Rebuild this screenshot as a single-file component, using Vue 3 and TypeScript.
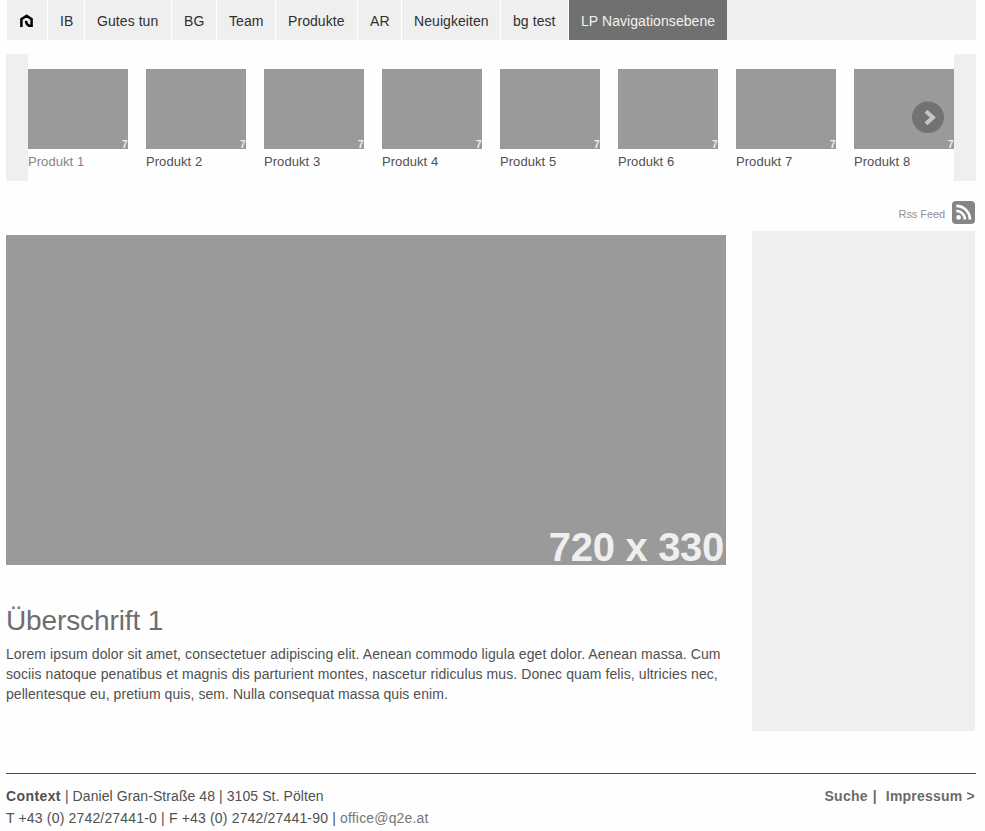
<script setup lang="ts">
interface NavItem {
  label: string
  active?: boolean
}

const navItems: NavItem[] = [
  { label: 'IB' },
  { label: 'Gutes tun' },
  { label: 'BG' },
  { label: 'Team' },
  { label: 'Produkte' },
  { label: 'AR' },
  { label: 'Neuigkeiten' },
  { label: 'bg test' },
  { label: 'LP Navigationsebene', active: true },
]

const products: string[] = Array.from({ length: 8 }, (_, i) => `Produkt ${i + 1}`)

const paragraph: string[] = [
  'Lorem ipsum dolor sit amet, consectetuer adipiscing elit. Aenean commodo ligula eget dolor. Aenean massa. Cum',
  'sociis natoque penatibus et magnis dis parturient montes, nascetur ridiculus mus. Donec quam felis, ultricies nec,',
  'pellentesque eu, pretium quis, sem. Nulla consequat massa quis enim.',
]
</script>

<template>
  <div class="page">
    <nav class="nav">
      <a class="nav-item home" aria-label="Home">
        <svg width="14" height="14" viewBox="0 0 14 14">
          <path d="M2.4 13V5.2L7.6 1.8l5 3.4v6.5H9.8Q7.2 10.6 7 6.8" fill="none" stroke="#000" stroke-width="2.5" />
        </svg>
      </a>
      <a v-for="item in navItems" :key="item.label" class="nav-item" :class="{ active: item.active }">{{ item.label }}</a>
    </nav>

    <section class="carousel">
      <div class="products">
        <a v-for="(name, i) in products" :key="name" class="product" :class="{ current: i === 0 }">
          <span class="thumb">7</span>
          <span class="name">{{ name }}</span>
        </a>
      </div>
      <button class="next" aria-label="Next">
        <svg width="32" height="32" viewBox="0 0 32 32">
          <ellipse cx="16" cy="16.3" rx="16" ry="15.7" fill="#727272" />
          <path d="M14 10.2l6.8 6.3-6.8 6.3" fill="none" stroke="#c4c4c4" stroke-width="4.2" />
        </svg>
      </button>
    </section>

    <div class="rss">
      <span>Rss Feed</span>
      <svg width="23" height="23" viewBox="0 0 23 23">
        <rect width="23" height="23" rx="4" fill="#858585" />
        <circle cx="6.6" cy="16.4" r="2.3" fill="#fff" />
        <path d="M4.3 9.9a8.6 8.6 0 0 1 8.6 8.6M4.3 4.9a13.6 13.6 0 0 1 13.6 13.6" fill="none" stroke="#fff" stroke-width="2.7" />
      </svg>
    </div>

    <div class="columns">
      <main class="content">
        <div class="hero">720 x 330</div>
        <h1>Überschrift 1</h1>
        <p class="copy"><span v-for="(line, i) in paragraph" :key="i" class="line">{{ line }}</span></p>
      </main>
      <aside class="sidebar"></aside>
    </div>

    <footer class="footer">
      <div class="contact">
        <div class="address"><b>Context</b> | Daniel Gran-Straße 48 | 3105 St. Pölten</div>
        <div class="phone">T +43 (0) 2742/27441-0 | F +43 (0) 2742/27441-90 | <a class="mail">office@q2e.at</a></div>
      </div>
      <div class="links"><a>Suche</a><span>|</span><a class="imprint">Impressum &gt;</a></div>
    </footer>
  </div>
</template>

<style>
body {
  margin: 0;
  background: #fefefe;
  overflow: hidden;
}
</style>

<style scoped>
.page {
  box-sizing: border-box;
  width: 985px;
  height: 831px;
  padding: 0 9px 0 6px;
  overflow: hidden;
  font-family: 'Liberation Sans', Arial, sans-serif;
  font-size: 14px;
  color: #505050;
}
.nav {
  display: grid;
  grid-template-columns: 40px 36px 86px 44px 58px 81px 43px 98px 67px 158px;
  column-gap: 1px;
  height: 40px;
  margin-left: 1px;
  background: linear-gradient(90deg, #fff 0 720px, #efefef 720px);
}
.nav-item {
  padding-left: 12px;
  line-height: 42px;
  height: 40px;
  background: #efefef;
  color: #303030;
  letter-spacing: 0.07px;
  white-space: nowrap;
}
.home svg {
  display: block;
  margin-top: 14px;
}
.nav-item.active {
  background: #707070;
  color: #f2f2f2;
}
.carousel {
  position: relative;
  box-sizing: border-box;
  height: 127px;
  margin-top: 14px;
  padding-top: 15px;
  border: solid #efefef;
  border-width: 0 22px;
}
.products {
  display: flex;
  gap: 18px;
}
.product {
  width: 100px;
  flex: none;
}
.product.current {
  color: #858585;
}
.thumb {
  display: block;
  box-sizing: border-box;
  height: 80px;
  padding: 70px 0.5px 0 0;
  background: #9a9a9a;
  color: #f0f0f0;
  font-size: 10px;
  font-weight: bold;
  line-height: 12px;
  text-align: right;
}
.name {
  display: block;
  font-size: 13px;
  line-height: 16px;
  margin-top: 5px;
  letter-spacing: 0.06px;
}
.next {
  position: absolute;
  right: 10px;
  top: 47px;
  width: 32px;
  height: 32px;
  padding: 0;
  border: 0;
  background: none;
}
.next svg {
  display: block;
}
.rss {
  display: flex;
  justify-content: flex-end;
  align-items: center;
  gap: 7px;
  height: 23px;
  margin: 20px 1px 0 0;
  font-size: 11px;
  letter-spacing: -0.08px;
  color: #929292;
}
.rss span {
  padding-top: 3px;
}
.columns {
  display: flex;
  justify-content: space-between;
  height: 500px;
  margin: 7px 1px 0 0;
}
.content {
  width: 720px;
}
.hero {
  box-sizing: border-box;
  height: 330px;
  margin-top: 4px;
  padding: 289px 2px 0 0;
  background: #9a9a9a;
  color: #efefef;
  font-size: 40px;
  font-weight: bold;
  letter-spacing: -0.3px;
  line-height: 46px;
  text-align: right;
}
h1 {
  margin: 40px 0 0;
  font-size: 28px;
  font-weight: normal;
  letter-spacing: -0.12px;
  line-height: 32px;
  color: #6e6e6e;
}
.copy {
  margin: 7px 0 0;
  line-height: 20px;
  letter-spacing: 0.087px;
}
.line {
  display: block;
  white-space: nowrap;
}
.line:last-child {
  letter-spacing: 0.055px;
}
.sidebar {
  width: 223px;
  background: #efefef;
}
.footer {
  display: flex;
  justify-content: space-between;
  margin-top: 42px;
  padding-top: 11px;
  border-top: 1px solid #4c4c4c;
  line-height: 22px;
}
.address {
  letter-spacing: 0.08px;
}
.address b {
  letter-spacing: 0.4px;
}
.phone {
  letter-spacing: 0.17px;
}
.mail {
  color: #777;
}
.links {
  display: flex;
  gap: 5px;
  margin-right: 1px;
  font-weight: bold;
  letter-spacing: 0.22px;
  color: #6b6b6b;
}
.imprint {
  margin-left: 4px;
}
</style>
